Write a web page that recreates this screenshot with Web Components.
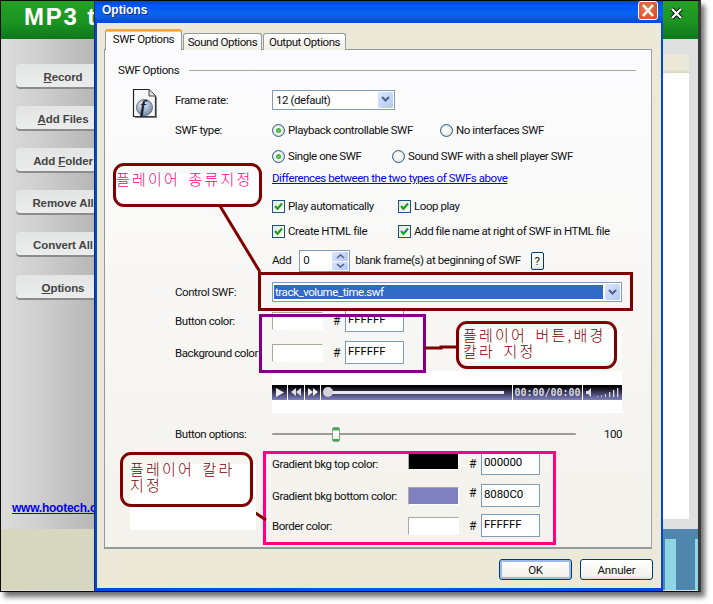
<!DOCTYPE html>
<html>
<head>
<meta charset="utf-8">
<title>Options</title>
<style>
html, body { margin:0; padding:0; background:#fff; }
body { width:713px; height:604px; position:relative; overflow:hidden; font:11.5px/14px Roboto, "Liberation Sans", sans-serif; letter-spacing:-.43px; color:#111; }
</style>
</head>
<body>
<app-window>
	<span slot="title">MP3 t</span>
	<app-button><u>R</u>ecord</app-button>
	<app-button><u>A</u>dd Files</app-button>
	<app-button>Add <u>F</u>older</app-button>
	<app-button>Remove All</app-button>
	<app-button>Convert All</app-button>
	<app-button style="margin-top:1px"><u>O</u>ptions</app-button>
	<a slot="link">www.hootech.com</a>
</app-window>

<xp-dialog caption="Options">
	<xp-tabs tabs="SWF Options|Sound Options|Output Options"></xp-tabs>
	<xp-panel>
		<xp-legend>SWF Options</xp-legend>

		<opt-row label="Frame rate:" style="margin-top:11px;height:21px">
			<flash-icon slot="icon"></flash-icon>
			<xp-select style="width:123px">12 (default)</xp-select>
		</opt-row>
		<opt-row label="SWF type:" style="margin-top:10px;height:20px">
			<xp-radio checked style="width:168px">Playback controllable SWF</xp-radio>
			<xp-radio>No interfaces SWF</xp-radio>
		</opt-row>
		<opt-row style="margin-top:6px;height:20px">
			<xp-radio checked style="width:120px">Single one SWF</xp-radio>
			<xp-radio>Sound SWF with a shell player SWF</xp-radio>
		</opt-row>
		<opt-row style="margin-top:4px;height:16px">
			<xp-link>Differences between the two types of SWFs above</xp-link>
		</opt-row>
		<opt-row style="margin-top:10px;height:20px">
			<xp-check style="width:126px">Play automatically</xp-check>
			<xp-check>Loop play</xp-check>
		</opt-row>
		<opt-row style="margin-top:5px;height:20px">
			<xp-check style="width:126px">Create HTML file</xp-check>
			<xp-check>Add file name at right of SWF in HTML file</xp-check>
		</opt-row>
		<opt-row style="margin-top:9px;height:22px">
			<span style="margin-top:-2px">Add</span>
			<xp-spin value="0" style="margin:0 5px 0 8px"></xp-spin>
			<span style="margin-top:-2px">blank frame(s) at beginning of SWF</span>
			<xp-button style="width:13px;height:18px;margin-left:10px;--radius:2px">?</xp-button>
		</opt-row>
		<opt-row label="Control SWF:" style="margin-top:10px;height:20px">
			<xp-select selected style="width:350px">track_volume_time.swf</xp-select>
		</opt-row>
		<color-row label="Button color:" value="FFFFFF" swatch="#ffffff" style="margin-top:7px"></color-row>
		<color-row label="Background color" value="FFFFFF" swatch="#ffffff" style="margin-top:9px"></color-row>
		<opt-row style="margin-top:7px;height:42px">
			<player-bar></player-bar>
		</opt-row>
		<opt-row label="Button options:" style="margin-top:11px;height:20px">
			<xp-slider></xp-slider>
			<span style="margin-left:28px">100</span>
		</opt-row>
		<color-row wide label="Gradient bkg top color:" value="000000" swatch="#000000" style="margin-top:8px;--sw-y:-3px"></color-row>
		<color-row wide label="Gradient bkg bottom color:" value="8080C0" swatch="#8080c0" style="margin-top:9px;--hash-y:-3px"></color-row>
		<color-row wide label="Border color:" value="FFFFFF" swatch="#ffffff" style="margin-top:7px"></color-row>
	</xp-panel>
	<xp-button slot="footer" focused style="width:73px;height:21px">OK</xp-button>
	<xp-button slot="footer" style="width:73px;height:21px">Annuler</xp-button>
</xp-dialog>

<note-box color="#800000" style="left:258px;top:272px;width:375px;height:39px"></note-box>
<note-box color="#800080" style="left:259px;top:314px;width:167px;height:59px"></note-box>
<note-box color="#ff0080" style="left:263px;top:451px;width:293px;height:94px"></note-box>
<note-lines></note-lines>

<note-callout color="#ff0080" style="left:113px;top:163px;width:149px;height:44px;--bg-x:2px;--bg-y:10px;--bg-w:148px;--bg-h:33px;--text-x:3px;--text-y:8px">플레이어 종류지정</note-callout>
<note-callout color="#800000" style="left:456px;top:321px;width:161px;height:48px;--bg-x:6px;--bg-y:8px;--bg-w:159px;--bg-h:33px;--text-x:7px;--text-y:6px">플레이어 버튼,배경<br>칼라 지정</note-callout>
<note-callout color="#800000" style="left:120px;top:452px;width:133px;height:55px;--bg-x:10px;--bg-y:12px;--bg-w:126px;--bg-h:66px;--text-x:10px;--text-y:9px">플레이어 칼라<br>지정</note-callout>

<script>
const FONT = 'Roboto, "Liberation Sans", sans-serif';
const BOLD = '"Liberation Sans", sans-serif';

class AppWindow extends HTMLElement {
	constructor() {
		super();
		this.attachShadow({mode: 'open'}).innerHTML = `
		<style>
		:host { display:block; position:absolute; left:0; top:0; width:701px; height:592px; box-sizing:border-box; border:solid #0a0a0a; border-width:1px 3px 1px 1px; border-right-color:#3a3a3a; background:#dfdfdf; box-shadow:4px 5px 5px rgba(0,0,0,.55); letter-spacing:0; }
		header { height:38px; background:linear-gradient(#25a024,#1c9422 55%,#0d771d); color:#fff; padding-left:23px; font:bold 24px/32px ${BOLD}; letter-spacing:1.8px; position:relative; white-space:nowrap; overflow:hidden; }
		.x { position:absolute; right:15px; top:6px; }
		.main { display:grid; grid-template-columns:95px 1fr; height:490px; }
		aside { background:linear-gradient(90deg,#dcdcdc,#cfcfcf 40%,#b6b6b6); display:flex; flex-direction:column; padding:25px 0 0 15px; gap:17px; position:relative; overflow:hidden; }
		.link { position:absolute; left:11px; top:462px; font:bold 12px/14px ${BOLD}; color:#0000ee; text-decoration:underline; white-space:nowrap; letter-spacing:-.25px; }
		.pane { padding:15px 9px 10px 567px; display:flex; flex-direction:column; margin-left:-95px; }
		.strip { height:19px; background:linear-gradient(#ece9d8 80%,#d8d5c5); }
		.white { flex:1; background:#fff; }
		.foot { height:61px; display:grid; grid-template-columns:95px 1fr; }
		.beige { background:linear-gradient(90deg,#d6d7bd,#d7d8c2); border-top:1px solid #555; margin-top:-1px; }
		.teal { background:linear-gradient(90deg,#5b93b8,#4f86ad); position:relative; overflow:hidden; }
		.teal i { position:absolute; top:10px; bottom:0; width:11px; background:#8fd6e4; }
		</style>
		<header><slot name="title"></slot>
			<svg class="x" width="13" height="13" viewBox="0 0 13 13"><path d="M2 2l9 9M11 2l-9 9" stroke="#000" stroke-width="4"/><path d="M2 2l9 9M11 2l-9 9" stroke="#fff" stroke-width="2.4"/></svg>
		</header>
		<div class="main">
			<aside><slot></slot><div class="link"><slot name="link"></slot></div></aside>
			<div class="pane"><div class="strip"></div><div class="white"></div></div>
		</div>
		<div class="foot"><div class="beige"></div><div class="teal"><i style="left:569px"></i><i style="left:599px;width:5px"></i></div></div>`;
	}
}
customElements.define('app-window', AppWindow);

class AppButton extends HTMLElement {
	constructor() {
		super();
		this.attachShadow({mode: 'open'}).innerHTML = `
		<style>
		:host { display:block; width:94px; height:25px; box-sizing:border-box; flex:none; background:linear-gradient(#e3e5e4,#eceeed); border-radius:4px 0 0 4px; box-shadow:inset 0 -2px 0 #8c8c8c; color:#444; font:bold 11.5px/26px ${BOLD}; letter-spacing:-.1px; text-align:center; }
		</style><slot></slot>`;
	}
}
customElements.define('app-button', AppButton);

class XpDialog extends HTMLElement {
	constructor() {
		super();
		this.attachShadow({mode: 'open'}).innerHTML = `
		<style>
		:host { display:flex; flex-direction:column; position:absolute; left:95px; top:1px; width:568px; height:590px; box-sizing:border-box; background:linear-gradient(90deg,#0048d8,#0058ee 50%,#0047d6); box-shadow:-1px 0 0 #0a2a88; }
		.bar { height:22px; flex:none; background:linear-gradient(#0047d8,#0058ee 25%,#0a64f0 60%,#0048d8); color:#fff; font:bold 12px/19px ${BOLD}; letter-spacing:0; padding-left:7px; position:relative; text-shadow:1px 1px 0 #0a2f8c; }
		.close { position:absolute; right:5px; top:0; width:20px; height:19px; box-sizing:border-box; border:1px solid #fff; border-radius:3px; background:radial-gradient(circle at 40% 40%,#ef7a55,#d6431e); }
		.close svg { display:block; margin:2px 2px; }
		.body { flex:1; margin:0 2px 3px 2px; background:#ece9d8; padding:7px 9px 0 7px; display:flex; flex-direction:column; }
		.foot { display:flex; justify-content:flex-end; gap:8px; padding-top:10px; margin-right:-1px; letter-spacing:-.2px; }
		</style>
		<div class="bar"><span></span><div class="close"><svg width="14" height="13" viewBox="0 0 14 13"><path d="M2 1l10 11M12 1L2 12" stroke="#fff" stroke-width="2.6"/></svg></div></div>
		<div class="body"><slot></slot><div class="foot"><slot name="footer"></slot></div></div>`;
		this.shadowRoot.querySelector('span').textContent = this.getAttribute('caption');
	}
}
customElements.define('xp-dialog', XpDialog);

class XpTabs extends HTMLElement {
	constructor() {
		super();
		const tabs = this.getAttribute('tabs').split('|');
		const widths = [77, 79, 83];
		this.attachShadow({mode: 'open'}).innerHTML = `
		<style>
		:host { display:flex; align-items:flex-end; height:20px; padding-left:1px; flex:none; position:relative; z-index:1; margin-bottom:-1px; gap:1px; }
		div { box-sizing:border-box; height:17px; border:1px solid #919b9c; border-bottom:0; border-radius:3px 3px 0 0; background:linear-gradient(#fff,#f1efe4); text-align:center; line-height:16px; white-space:nowrap; }
		.on { height:21px; background:#fcfcfe; border-top:2px solid #f2a33a; box-shadow:inset 0 1px 0 #ffc73c; line-height:17px; }
		</style>` + tabs.map((t, i) => `<div class="${i === 0 ? 'on' : ''}" style="width:${widths[i]}px">${t}</div>`).join('');
	}
}
customElements.define('xp-tabs', XpTabs);

class XpPanel extends HTMLElement {
	constructor() {
		super();
		this.attachShadow({mode: 'open'}).innerHTML = `
		<style>
		:host { display:flex; flex-direction:column; flex:none; height:500px; box-sizing:border-box; border:1px solid #919b9c; border-right-color:#9aa3a4; border-bottom-width:2px; background:linear-gradient(#fcfcfe,#f3f2ec); padding:12px 0 0 13px; }
		</style><slot></slot>`;
	}
}
customElements.define('xp-panel', XpPanel);

class XpLegend extends HTMLElement {
	constructor() {
		super();
		this.attachShadow({mode: 'open'}).innerHTML = `
		<style>
		:host { display:flex; align-items:center; height:16px; gap:10px; margin-right:15px; white-space:nowrap; }
		i { flex:1; height:1px; background:#aca899; }
		</style><slot></slot><i></i>`;
	}
}
customElements.define('xp-legend', XpLegend);

class OptRow extends HTMLElement {
	constructor() {
		super();
		this.attachShadow({mode: 'open'}).innerHTML = `
		<style>
		:host { display:grid; grid-template-columns:57px 97px 1fr; align-items:center; flex:none; white-space:nowrap; }
		.icon { align-self:start; height:0; padding-left:14px; margin-top:-1px; }
		.slot { display:flex; align-items:center; }
		</style>
		<div class="icon"><slot name="icon"></slot></div>
		<div class="label"></div>
		<div class="slot"><slot></slot></div>`;
		this.shadowRoot.querySelector('.label').textContent = this.getAttribute('label') || '';
	}
}
customElements.define('opt-row', OptRow);

class FlashIcon extends HTMLElement {
	constructor() {
		super();
		this.attachShadow({mode: 'open'}).innerHTML = `
		<style>:host { display:block; width:25px; height:31px; } svg { display:block; }</style>
		<svg width="25" height="31" viewBox="0 0 25 31">
			<defs><radialGradient id="g" cx=".4" cy=".3" r=".75"><stop offset="0" stop-color="#eef1f5"/><stop offset="1" stop-color="#6f85a3"/></radialGradient></defs>
			<path d="M1.5 1.5H17L23.500 8V28.500H1.5Z" fill="#f7f7f7" stroke="#222" stroke-width="1.2"/>
			<path d="M17 1.5V8H23.500" fill="#dcdcdc" stroke="#444"/>
			<path d="M24.300 9V29.300H3" fill="none" stroke="#777" stroke-width="1.2"/>
			<circle cx="12.500" cy="19.500" r="8" fill="url(#g)" stroke="#5a6f8c"/>
			<text x="8" y="25" font-family="Liberation Serif" font-style="italic" font-weight="bold" font-size="18" fill="#16263f">f</text>
		</svg>`;
	}
}
customElements.define('flash-icon', FlashIcon);

const CHEVRON = `<svg width="9" height="7" viewBox="0 0 9 7"><path d="M1 1l3.5 3.5L8 1" fill="none" stroke="#4d6185" stroke-width="2"/></svg>`;

class XpSelect extends HTMLElement {
	constructor() {
		super();
		this.attachShadow({mode: 'open'}).innerHTML = `
		<style>
		:host { display:flex; box-sizing:border-box; height:20px; border:1px solid #7f9db9; background:#fff; padding:1px; align-items:stretch; }
		.txt { flex:1; padding-left:2px; line-height:16px; margin-right:2px; overflow:hidden; }
		:host([selected]) .txt { background:#316ac5; color:#fff; margin-top:1px; margin-bottom:1px; line-height:15px; padding-left:1px; }
		.btn { width:15px; background:linear-gradient(135deg,#dce6fd,#b2c6f6); border-radius:2px; display:flex; align-items:center; justify-content:center; flex:none; }
		</style>
		<div class="txt"><slot></slot></div><div class="btn">${CHEVRON}</div>`;
	}
}
customElements.define('xp-select', XpSelect);

class XpRadio extends HTMLElement {
	constructor() {
		super();
		this.attachShadow({mode: 'open'}).innerHTML = `
		<style>
		:host { display:flex; align-items:center; gap:3px; white-space:nowrap; flex:none; }
		i { width:13px; height:13px; box-sizing:border-box; border:1px solid #2f5f88; border-radius:50%; background:radial-gradient(circle at 40% 40%,#fff,#e2e2dc); display:flex; align-items:center; justify-content:center; box-shadow:inset 0 0 1px #7f9db9; }
		b { display:none; width:5px; height:5px; border-radius:50%; background:radial-gradient(#5fd05f,#22a022); }
		:host([checked]) b { display:block; }
		</style><i><b></b></i><slot></slot>`;
	}
}
customElements.define('xp-radio', XpRadio);

class XpCheck extends HTMLElement {
	constructor() {
		super();
		this.attachShadow({mode: 'open'}).innerHTML = `
		<style>
		:host { display:flex; align-items:center; gap:3px; white-space:nowrap; flex:none; }
		i { width:13px; height:13px; box-sizing:border-box; border:1px solid #1c5180; background:linear-gradient(135deg,#e6e6e0,#fff); display:block; }
		svg { display:block; }
		</style><i><svg width="11" height="11" viewBox="0 0 11 11"><path d="M2 5l2.5 2.8L9 2.5" fill="none" stroke="#21a121" stroke-width="2.2"/></svg></i><slot></slot>`;
	}
}
customElements.define('xp-check', XpCheck);

class XpSpin extends HTMLElement {
	constructor() {
		super();
		this.attachShadow({mode: 'open'}).innerHTML = `
		<style>
		:host { display:flex; box-sizing:border-box; width:51px; height:22px; border:1px solid #7f9db9; background:#fff; padding:1px; }
		span { flex:1; padding-left:2px; line-height:16px; }
		div { display:flex; flex-direction:column; gap:1px; width:16px; }
		div b { flex:1; background:linear-gradient(135deg,#dce6fd,#b2c6f6); display:flex; align-items:center; justify-content:center; border-radius:1px; }
		</style>
		<span>${this.getAttribute('value')}</span>
		<div><b><svg width="9" height="5" viewBox="0 0 9 5"><path d="M1 4l3.5-3L8 4" fill="none" stroke="#4d6185" stroke-width="1.6"/></svg></b><b><svg width="9" height="5" viewBox="0 0 9 5"><path d="M1 1l3.5 3L8 1" fill="none" stroke="#4d6185" stroke-width="1.6"/></svg></b></div>`;
	}
}
customElements.define('xp-spin', XpSpin);

class XpButton extends HTMLElement {
	constructor() {
		super();
		this.attachShadow({mode: 'open'}).innerHTML = `
		<style>
		:host { display:flex; align-items:center; justify-content:center; box-sizing:border-box; flex:none; border:1px solid #003c74; border-radius:var(--radius,3px); background:linear-gradient(#fff,#f3f2ea 85%,#dcd8c8); color:#111; }
		:host([focused]) { box-shadow:inset 0 0 0 2px #9dbbe8; }
		</style><slot></slot>`;
	}
}
customElements.define('xp-button', XpButton);

class ColorRow extends HTMLElement {
	constructor() {
		super();
		const wide = this.hasAttribute('wide');
		this.attachShadow({mode: 'open'}).innerHTML = `
		<style>
		:host { display:grid; grid-template-columns:${wide ? '136px' : '97px'} 51px 22px 59px; margin-left:${wide ? '154px' : '57px'}; height:23px; align-items:center; flex:none; white-space:nowrap; }
		.sw { height:18px; box-sizing:border-box; border:1px solid; border-color:#aca899 #fff #fff #aca899; background:${this.getAttribute('swatch')}; margin-top:1px; transform:translateY(var(--sw-y,0)); }
		.hash { padding-left:10px; font-size:12px; transform:translateY(var(--hash-y,0)); }
		.inp { box-sizing:border-box; height:23px; border:1px solid #7f9db9; background:#fff; padding-left:2px; line-height:19px; color:#000; letter-spacing:-.1px; }
		</style>
		<div class="lbl">${this.getAttribute('label')}</div><div class="sw"></div><div class="hash">#</div><div class="inp">${this.getAttribute('value')}</div>`;
	}
}
customElements.define('color-row', ColorRow);

class PlayerBar extends HTMLElement {
	constructor() {
		super();
		this.attachShadow({mode: 'open'}).innerHTML = `
		<style>
		:host { display:flex; align-items:center; width:350px; height:42px; background:#fff; box-sizing:border-box; }
		.bar { flex:1; height:15px; display:flex; background:linear-gradient(#000 10%,#3a3a5c 50%,#8080c0); }
		.c { border-right:1px solid #fff; display:flex; align-items:center; justify-content:center; box-sizing:border-box; flex:none; height:15px; }
		svg { display:block; }
		.track { position:relative; width:192px; justify-content:flex-start; }
		.track i { position:absolute; left:7px; right:8px; top:6px; height:3px; background:#e8e8ee; }
		.track b { position:absolute; left:2px; top:2px; width:10px; height:10px; border-radius:50%; background:#d2d2d8; }
		.time { width:70px; font:bold 10px/15px "DejaVu Sans Mono", monospace; color:#d8d8e0; letter-spacing:0; white-space:nowrap; overflow:hidden; }
		.vol { flex:1; border:0; justify-content:flex-start; padding-left:3px; }
		</style>
		<div class="bar">
			<div class="c" style="width:16px"><svg width="9" height="9" viewBox="0 0 9 9"><path d="M1 0l8 4.5L1 9z" fill="#eee"/></svg></div>
			<div class="c" style="width:17px"><svg width="10" height="8" viewBox="0 0 10 8"><path d="M5 0v8L0 4zM10 0v8L5 4z" fill="#ddd"/></svg></div>
			<div class="c" style="width:16px"><svg width="10" height="8" viewBox="0 0 10 8"><path d="M0 0v8l5-4zM5 0v8l5-4z" fill="#eee"/></svg></div>
			<div class="c track"><i></i><b></b></div>
			<div class="c time">00:00/00:00</div>
			<div class="c vol"><svg width="36" height="11" viewBox="0 0 36 11"><path d="M0 4h2l3-3v9L2 7H0z" fill="#ddd"/><path d="M11 9h1v1h-1zM15 8.500h1V10h-1zM19 7h1v3h-1zM23 5h1.300v5H23zM27 3h1.300v7H27zM31 1h1.300v9H31z" fill="#ddd"/></svg></div>
		</div>`;
	}
}
customElements.define('player-bar', PlayerBar);

class XpSlider extends HTMLElement {
	constructor() {
		super();
		this.attachShadow({mode: 'open'}).innerHTML = `
		<style>
		:host { display:block; position:relative; width:304px; height:15px; }
		i { position:absolute; left:0; right:0; top:6px; height:2px; background:#9c9c94; border-radius:1px; }
		b { position:absolute; left:60px; top:0; width:8px; height:15px; box-sizing:border-box; border:1px solid #8c9a98; border-radius:2px; background:linear-gradient(#3fb04a 0,#3fb04a 2px,#fff 3px,#f0f0ea 11px,#3fb04a 11.500px); }
		</style><i></i><b></b>`;
	}
}
customElements.define('xp-slider', XpSlider);

class XpLink extends HTMLElement {
	constructor() {
		super();
		this.attachShadow({mode: 'open'}).innerHTML = `<style>:host { display:block; color:#0000ee; text-decoration:underline; }</style><slot></slot>`;
	}
}
customElements.define('xp-link', XpLink);

class NoteBox extends HTMLElement {
	constructor() {
		super();
		this.attachShadow({mode: 'open'}).innerHTML = `
		<style>:host { display:block; position:absolute; box-sizing:border-box; border:3px solid ${this.getAttribute('color')}; }</style>`;
	}
}
customElements.define('note-box', NoteBox);

class NoteLines extends HTMLElement {
	constructor() {
		super();
		this.attachShadow({mode: 'open'}).innerHTML = `
		<style>:host { display:block; position:absolute; left:0; top:0; width:713px; height:604px; pointer-events:none; } svg { display:block; }</style>
		<svg width="713" height="604" fill="none" stroke="#800000" stroke-width="3">
			<path d="M220 206L260 272"/>
			<path d="M425 348H441V347H457"/>
			<path d="M245 506L266 520"/>
		</svg>`;
	}
}
customElements.define('note-lines', NoteLines);

class NoteCallout extends HTMLElement {
	constructor() {
		super();
		this.attachShadow({mode: 'open'}).innerHTML = `
		<style>
		:host { display:block; position:absolute; box-sizing:border-box; font:300 15px/16px "Noto Sans CJK KR", sans-serif; letter-spacing:0; }
		.bg { position:absolute; left:var(--bg-x); top:var(--bg-y); width:var(--bg-w); height:var(--bg-h); background:#fff; }
		.frame { position:absolute; inset:0; box-sizing:border-box; border:3px solid #800000; border-radius:11px; }
		.txt { position:absolute; left:var(--text-x); top:var(--text-y); white-space:nowrap; letter-spacing:2.2px; word-spacing:3px; color:${this.getAttribute('color')}; }
		</style>
		<div class="bg"></div><div class="frame"></div><div class="txt"><slot></slot></div>`;
	}
}
customElements.define('note-callout', NoteCallout);
</script>
</body>
</html>
